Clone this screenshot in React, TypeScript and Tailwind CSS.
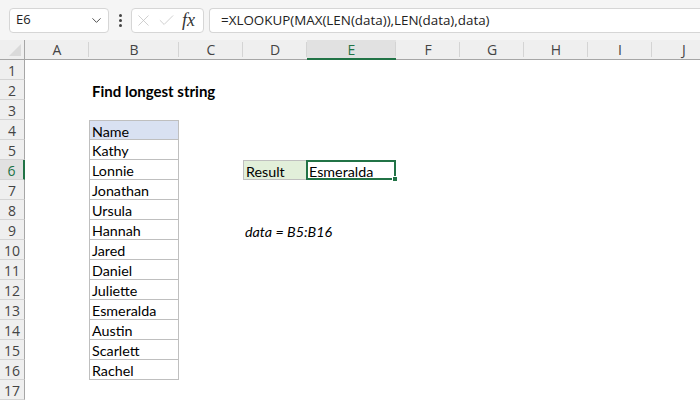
import { ChevronDown, Check, X } from 'lucide-react'

const cols = [
  { id: 'A', w: 64 },
  { id: 'B', w: 90 },
  { id: 'C', w: 64 },
  { id: 'D', w: 64 },
  { id: 'E', w: 89 },
  { id: 'F', w: 64 },
  { id: 'G', w: 64 },
  { id: 'H', w: 64 },
  { id: 'I', w: 64 },
  { id: 'J', w: 64 },
]

const names = [
  'Kathy',
  'Lonnie',
  'Jonathan',
  'Ursula',
  'Hannah',
  'Jared',
  'Daniel',
  'Juliette',
  'Esmeralda',
  'Austin',
  'Scarlett',
  'Rachel',
]

const rows = Array.from({ length: 17 }, (_, i) => i + 1)

function Cell({ row, col }: { row: number; col: string }) {
  const base = 'h-5 relative text-[14.3px] leading-5 whitespace-nowrap text-black'

  if (col === 'B' && row === 2) {
    return (
      <div className={base}>
        <span className="absolute left-[3px] top-[1px] font-bold text-[15px]">Find longest string</span>
      </div>
    )
  }
  if (col === 'B' && row === 4) {
    return (
      <div className={`${base} bg-[#d9e1f2] border border-[#bfbfbf]`}>
        <span className="absolute left-[2px] top-[1px]">Name</span>
      </div>
    )
  }
  if (col === 'B' && row >= 5 && row <= 16) {
    return (
      <div className={`${base} border-x border-b border-[#bfbfbf]`}>
        <span className="absolute left-[2px] top-[1px]">{names[row - 5]}</span>
      </div>
    )
  }
  if (col === 'D' && row === 6) {
    return (
      <div className={`${base} bg-[#e2efda] border border-[#bfbfbf]`}>
        <span className="absolute left-[2px] top-[1px]">Result</span>
      </div>
    )
  }
  if (col === 'E' && row === 6) {
    return (
      <div className={`${base} border-2 border-[#217346] ml-[-1px]`}>
        <span className="absolute left-[1px] top-0">Esmeralda</span>
        <span className="absolute right-[-4px] bottom-[-4px] w-[6px] h-[6px] bg-[#217346] border border-white" />
      </div>
    )
  }
  if (col === 'D' && row === 9) {
    return (
      <div className={base}>
        <span className="absolute left-[2px] top-[2px] italic">data = B5:B16</span>
      </div>
    )
  }
  return <div className={base} />
}

export default function App() {
  return (
    <div
      className="w-[700px] h-[400px] overflow-hidden bg-white"
      style={{ fontFamily: 'Lato, "Open Sans", sans-serif' }}
    >
      {/* formula bar */}
      <div
        className="h-10 bg-[#f5f5f5] flex items-center pl-[9px] text-[13.4px] text-[#222]"
        style={{ fontFamily: '"Open Sans", "Noto Sans", sans-serif' }}
      >
        <div className="w-[100px] h-[25px] bg-white border border-[#d6d6d6] rounded-[4px] flex items-center justify-between pl-[6px] pr-[4px] shrink-0">
          <span className="text-[13px]">E6</span>
          <ChevronDown size={15} strokeWidth={1.5} className="text-[#444]" />
        </div>
        <div className="w-[22px] flex flex-col items-center gap-[2px] shrink-0">
          <span className="w-[3px] h-[3px] rounded-full bg-[#444]" />
          <span className="w-[3px] h-[3px] rounded-full bg-[#444]" />
          <span className="w-[3px] h-[3px] rounded-full bg-[#444]" />
        </div>
        <div className="w-[73px] h-[25px] bg-white border border-[#d6d6d6] rounded-[4px] flex items-center pl-[2px] gap-[4px] shrink-0">
          <X size={19} strokeWidth={1} className="text-[#c4c4c4]" />
          <Check size={19} strokeWidth={1} className="text-[#c4c4c4]" />
          <span
            className="italic text-[18px] text-[#333] leading-none ml-[2px]"
            style={{ fontFamily: '"Liberation Serif", serif' }}
          >
            fx
          </span>
        </div>
        <div className="ml-[5px] flex-1 h-[25px] bg-white border border-[#d6d6d6] rounded-l-[4px] border-r-0 flex items-center pl-[11px] whitespace-nowrap">
          =XLOOKUP(MAX(LEN(data)),LEN(data),data)
        </div>
      </div>

      {/* sheet */}
      <div className="grid grid-cols-[25px_64px_90px_64px_64px_89px_64px_64px_64px_64px_64px]">
        {/* column header row */}
        <div className="h-5 bg-[#efefef] border-b border-r border-[#a6a6a6] relative">
          <span className="absolute right-[3px] bottom-[3px] w-0 h-0 border-l-[12px] border-l-transparent border-b-[12px] border-b-[#dadada]" />
        </div>
        {cols.map(c => (
          <div
            key={c.id}
            className={
              c.id === 'E'
                ? 'h-5 bg-[#e1e1e1] border-b-2 border-[#217346] flex items-center justify-center text-[14px] text-[#217346] relative'
                : 'h-5 bg-[#efefef] border-b border-[#a6a6a6] flex items-center justify-center text-[14px] text-[#444] relative'
            }
            style={{ fontFamily: '"Open Sans", "Noto Sans", sans-serif' }}
          >
            <span className="absolute right-0 top-[2px] bottom-[2px] w-px bg-[#d4d4d4]" />
            {c.id}
          </div>
        ))}

        {rows.map(r => (
          <div key={r} className="contents">
            <div
              className={
                r === 6
                  ? 'h-5 bg-[#e1e1e1] border-r-2 border-[#217346] border-b border-b-[#d4d4d4] flex items-center justify-center pt-px text-[14px] text-[#217346]'
                  : 'h-5 bg-[#efefef] border-r border-[#a6a6a6] border-b border-b-[#d4d4d4] flex items-center justify-center pt-px text-[14px] text-[#444]'
              }
              style={{ fontFamily: '"Open Sans", "Noto Sans", sans-serif' }}
            >
              {r}
            </div>
            {cols.map(c => (
              <Cell key={c.id} row={r} col={c.id} />
            ))}
          </div>
        ))}
      </div>
    </div>
  )
}
